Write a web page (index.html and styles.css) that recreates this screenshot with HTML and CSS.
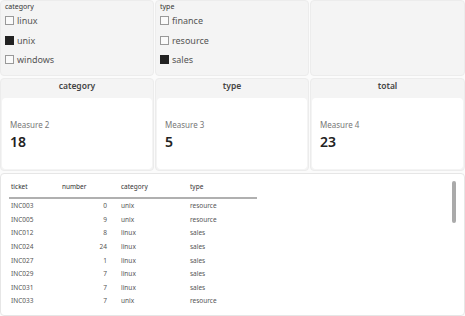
FILE: index.html
```html
<!DOCTYPE html>
<html lang="en">
  <head>
    <meta charset="UTF-8" />
    <meta name="viewport" content="width=device-width, initial-scale=1.0" />
    <title>Dashboard</title>
    <link rel="stylesheet" href="styles.css">
  </head>
  <body>
    <div class="dash">
      <div class="filters">
        <div class="panel filter">
          <p class="filter-title">category</p>
          <label class="opt"><span class="box"></span>linux</label>
          <label class="opt"><span class="box checked"></span>unix</label>
          <label class="opt"><span class="box"></span>windows</label>
        </div>
        <div class="panel filter">
          <p class="filter-title">type</p>
          <label class="opt"><span class="box"></span>finance</label>
          <label class="opt"><span class="box"></span>resource</label>
          <label class="opt"><span class="box checked"></span>sales</label>
        </div>
        <div class="panel filter"></div>
      </div>

      <div class="measures">
        <div class="panel measure">
          <p class="measure-head">category</p>
          <div class="card">
            <p class="card-label">Measure 2</p>
            <p class="card-value">18</p>
          </div>
        </div>
        <div class="panel measure">
          <p class="measure-head">type</p>
          <div class="card">
            <p class="card-label">Measure 3</p>
            <p class="card-value">5</p>
          </div>
        </div>
        <div class="panel measure">
          <p class="measure-head">total</p>
          <div class="card">
            <p class="card-label">Measure 4</p>
            <p class="card-value">23</p>
          </div>
        </div>
      </div>

      <div class="table-panel">
        <table class="tickets">
          <thead>
            <tr><th>ticket</th><th>number</th><th>category</th><th>type</th></tr>
          </thead>
          <tbody>
            <tr><td>INC003</td><td class="num">0</td><td>unix</td><td>resource</td></tr>
            <tr><td>INC005</td><td class="num">9</td><td>unix</td><td>resource</td></tr>
            <tr><td>INC012</td><td class="num">8</td><td>linux</td><td>sales</td></tr>
            <tr><td>INC024</td><td class="num">24</td><td>linux</td><td>sales</td></tr>
            <tr><td>INC027</td><td class="num">1</td><td>linux</td><td>sales</td></tr>
            <tr><td>INC029</td><td class="num">7</td><td>linux</td><td>sales</td></tr>
            <tr><td>INC031</td><td class="num">7</td><td>linux</td><td>sales</td></tr>
            <tr><td>INC033</td><td class="num">7</td><td>unix</td><td>resource</td></tr>
          </tbody>
        </table>
        <div class="scroll-thumb"></div>
      </div>
    </div>
  </body>
</html>
```

FILE: styles.css
```css
body {
  margin: 0;
  font-family: "Noto Sans", "Open Sans", sans-serif;
  background-color: #fbfbfb;
  color: #333;
}
p {
  margin: 0;
}
.dash {
  width: 465px;
  height: 316px;
  display: flex;
  flex-direction: column;
  gap: 2px;
  overflow: hidden;
}
.panel {
  background-color: #f4f4f4;
  border: 1px solid #ececec;
  border-radius: 4px;
  box-sizing: border-box;
}
.filters,
.measures {
  display: grid;
  grid-template-columns: 154px 154px 1fr;
  gap: 1px;
}
.filter {
  height: 76px;
  padding: 1px 4px;
}
.filter-title {
  font-size: 7px;
  line-height: 9px;
  color: #333;
}
.opt {
  display: flex;
  align-items: center;
  gap: 3px;
  height: 19.5px;
  font-size: 9px;
  color: #555;
}
.box {
  width: 9px;
  height: 9px;
  border: 1px solid #999;
  background-color: #fafafa;
  box-sizing: border-box;
}
.box.checked {
  background-color: #222;
  border-color: #222;
}
.measure {
  height: 93px;
  display: flex;
  flex-direction: column;
  padding: 0 1px 1px;
}
.measure-head {
  height: 19px;
  line-height: 13px;
  text-align: center;
  font-size: 8.5px;
  font-weight: 600;
  color: #444;
}
.card {
  flex: 1;
  background-color: #fff;
  border-radius: 4px;
  padding: 21px 8px 0;
}
.card-label {
  font-size: 8px;
  line-height: 12px;
  color: #777;
}
.card-value {
  margin-top: 2px;
  font-size: 14px;
  line-height: 17px;
  font-weight: 600;
  color: #222;
}
.table-panel {
  position: relative;
  flex: 1;
  background-color: #fff;
  border: 1px solid #e6e6e6;
  border-radius: 4px;
  padding: 2px 8px 0;
}
.tickets {
  border-collapse: collapse;
  table-layout: fixed;
  font-size: 6.5px;
  color: #555;
}
.tickets th {
  font-weight: 400;
  text-align: left;
  height: 21px;
  padding: 0 0 0 2px;
  color: #333;
  border-bottom: 2px solid #b0b0b0;
}
.tickets td {
  height: 13.6px;
  padding: 0 0 0 2px;
}
.tickets th:nth-child(1) { width: 49px; }
.tickets th:nth-child(2) { width: 57px; }
.tickets th:nth-child(3) { width: 67px; }
.tickets th:nth-child(4) { width: 67px; }
.tickets .num {
  text-align: right;
  padding-right: 12px;
}
.scroll-thumb {
  position: absolute;
  top: 7px;
  right: 8px;
  width: 4px;
  height: 42px;
  border-radius: 2px;
  background-color: #aaa;
}
```
